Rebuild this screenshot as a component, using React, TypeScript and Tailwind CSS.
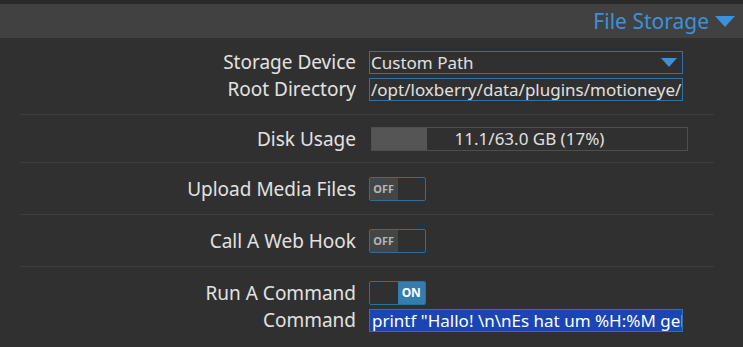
import React from "react";

const font = { fontFamily: '"Noto Sans", "Open Sans", sans-serif' };

function Label({ children }: { children: React.ReactNode }) {
  return (
    <div className="w-[336px] shrink-0 whitespace-nowrap text-right text-[19px] leading-[23px] text-[#e2e2e2]">
      {children}
    </div>
  );
}

function Row({ label, children }: { label: string; children: React.ReactNode }) {
  return (
    <div className="flex items-center gap-[13px]">
      <Label>{label}</Label>
      <div className="w-[314px]">{children}</div>
    </div>
  );
}

function Toggle({ on }: { on: boolean }) {
  return (
    <div className="flex h-[24px] w-[57px] overflow-hidden rounded-[2px] border border-[#2f6e9c]">
      {on ? (
        <>
          <div className="w-1/2" />
          <div className="flex w-1/2 items-center justify-center bg-[#357caf] text-[12px] font-bold text-white">
            ON
          </div>
        </>
      ) : (
        <>
          <div className="flex w-1/2 items-center justify-center bg-[#454545] text-[11px] font-bold text-[#b5b5b5]">
            OFF
          </div>
          <div className="w-1/2" />
        </>
      )}
    </div>
  );
}

function Group({ children, pt, pb, last }: { children: React.ReactNode; pt: string; pb: string; last?: boolean }) {
  return (
    <div className={`${pt} ${pb} ${last ? "" : "border-b border-[#3d3d3d]"} ml-[20px] mr-[29px]`}>
      {children}
    </div>
  );
}

export default function App() {
  return (
    <div style={font} className="h-[347px] w-[743px] overflow-hidden bg-[#303030]">
      <div className="h-[4px] bg-[#2a2a2a]" />
      <div className="flex h-[34px] items-center justify-end gap-[5px] bg-[#414141] pr-[7px]">
        <span className="text-[21px] leading-none text-[#3b92dc]">File Storage</span>
        <svg width="22" height="16" viewBox="0 0 22 16">
          <polygon points="1,3 21,3 11,14" fill="#3b92dc" />
        </svg>
      </div>
      <div className="flex flex-col">
        <Group pt="pt-[13px]" pb="pb-[13px]">
          <div className="flex flex-col gap-[4px]">
            <Row label="Storage Device">
              <div className="flex h-[23px] items-center justify-between border border-[#2e72a8] pl-[1px] pr-[5px] text-[17px] text-[#e0e0e0]">
                <span>Custom Path</span>
                <svg width="16" height="11" viewBox="0 0 16 11">
                  <polygon points="0,1 16,1 8,10" fill="#3b92dc" />
                </svg>
              </div>
            </Row>
            <Row label="Root Directory">
              <div className="flex h-[23px] items-center overflow-hidden whitespace-nowrap border border-[#2e72a8] pl-[1px] text-[17px] text-[#e0e0e0]">
                /opt/loxberry/data/plugins/motioneye/
              </div>
            </Row>
          </div>
        </Group>
        <Group pt="pt-[12px]" pb="pb-[11px]">
          <Row label="Disk Usage">
            <div className="relative ml-[2px] flex h-[24px] w-[317px] items-center justify-center border border-[#4e4e4e] text-[17px] text-[#e0e0e0]">
              <div className="absolute left-0 top-0 h-full w-[55px] bg-[#555555]" />
              <span className="relative">11.1/63.0 GB (17%)</span>
            </div>
          </Row>
        </Group>
        <Group pt="pt-[14px]" pb="pb-[13px]">
          <Row label="Upload Media Files">
            <Toggle on={false} />
          </Row>
        </Group>
        <Group pt="pt-[14px]" pb="pb-[13px]">
          <Row label="Call A Web Hook">
            <Toggle on={false} />
          </Row>
        </Group>
        <Group pt="pt-[14px]" pb="pb-[13px]" last>
          <div className="flex flex-col gap-[4px]">
            <Row label="Run A Command">
              <Toggle on={true} />
            </Row>
            <Row label="Command">
              <div className="flex h-[23px] items-center overflow-hidden whitespace-nowrap border border-[#2e72a8] bg-[#1b45b3] pl-[2px] text-[17px] text-white">
                printf "Hallo! \n\nEs hat um %H:%M geklingelt"
              </div>
            </Row>
          </div>
        </Group>
      </div>
    </div>
  );
}
